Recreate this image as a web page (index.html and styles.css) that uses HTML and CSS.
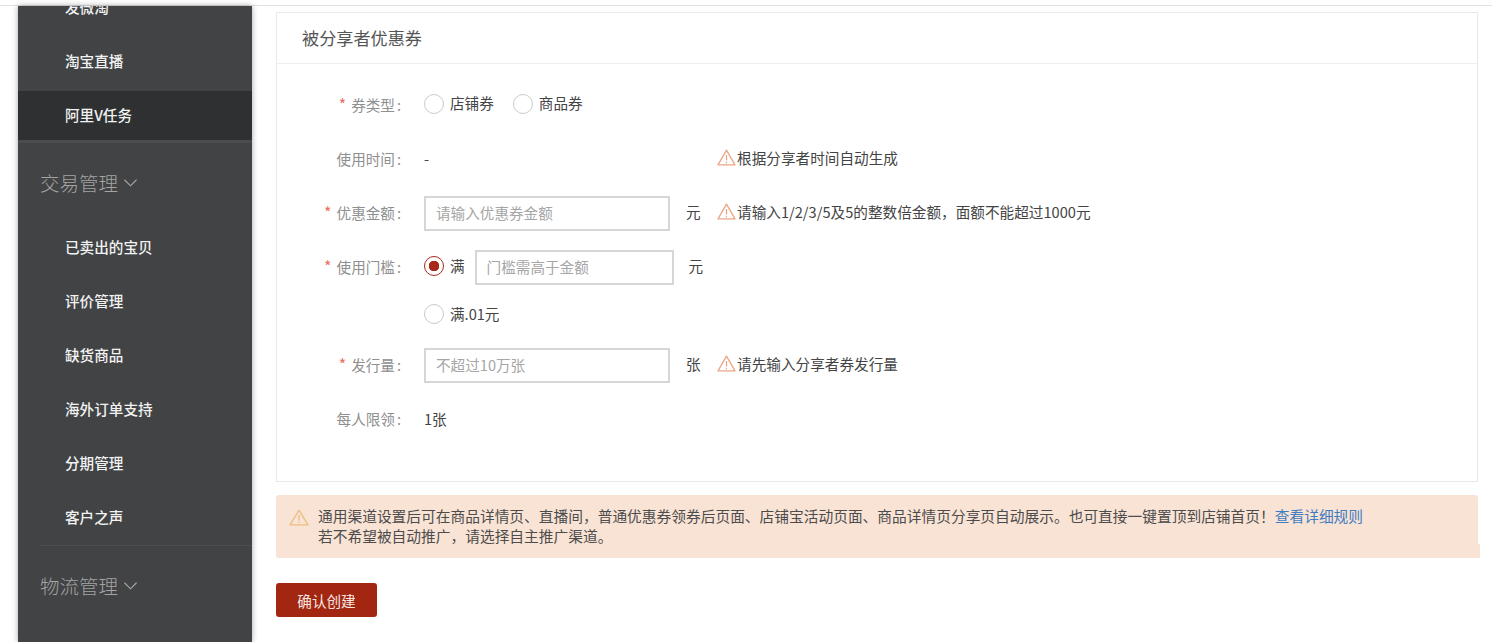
FILE: index.html
```html
<!DOCTYPE html>
<html lang="zh-CN">
<head>
<meta charset="utf-8">
<title>被分享者优惠券</title>
<link rel="stylesheet" href="styles.css">
</head>
<body>
<div class="page">
  <aside class="sidebar">
    <ul class="menu">
      <li class="item">发微淘</li>
      <li class="item">淘宝直播</li>
      <li class="item active">阿里V任务</li>
      <li class="group">交易管理<svg class="chev" viewBox="0 0 14 8"><path d="M.5.5 7 7 13.5.5"/></svg></li>
      <li class="item">已卖出的宝贝</li>
      <li class="item">评价管理</li>
      <li class="item">缺货商品</li>
      <li class="item">海外订单支持</li>
      <li class="item">分期管理</li>
      <li class="item">客户之声</li>
      <li class="divider"></li>
      <li class="group group-last">物流管理<svg class="chev" viewBox="0 0 14 8"><path d="M.5.5 7 7 13.5.5"/></svg></li>
    </ul>
  </aside>
  <main class="main">
    <section class="card">
      <h2 class="card-title">被分享者优惠券</h2>
      <div class="form">
        <div class="row">
          <div class="label"><span class="req">*</span>券类型<span class="colon">:</span></div>
          <div class="control wide">
            <span class="radio"></span><span class="opt opt-up">店铺券</span>
            <span class="radio radio-second"></span><span class="opt opt-up">商品券</span>
          </div>
        </div>
        <div class="row">
          <div class="label">使用时间<span class="colon">:</span></div>
          <div class="control value">-</div>
          <div class="unit"></div>
          <div class="hint"><svg class="warn" viewBox="0 0 19 17"><path d="M9.5 1.2 1 15.8h17z"/><path d="M9.5 6v5.6M9.5 12.8v1.4"/></svg>根据分享者时间自动生成</div>
        </div>
        <div class="row">
          <div class="label"><span class="req">*</span>优惠金额<span class="colon">:</span></div>
          <div class="control"><input class="input" placeholder="请输入优惠券金额"></div>
          <div class="unit">元</div>
          <div class="hint"><svg class="warn" viewBox="0 0 19 17"><path d="M9.5 1.2 1 15.8h17z"/><path d="M9.5 6v5.6M9.5 12.8v1.4"/></svg>请输入1/2/3/5及5的整数倍金额，面额不能超过1000元</div>
        </div>
        <div class="row">
          <div class="label"><span class="req">*</span>使用门槛<span class="colon">:</span></div>
          <div class="control wide">
            <span class="radio checked"></span><span class="opt">满</span>
            <input class="input input-small" placeholder="门槛需高于金额">
            <span class="unit-inline">元</span>
          </div>
        </div>
        <div class="row row-short">
          <div class="label"></div>
          <div class="control wide"><span class="radio"></span><span class="opt">满.01元</span></div>
        </div>
        <div class="row row-tall">
          <div class="label"><span class="req">*</span>发行量<span class="colon">:</span></div>
          <div class="control"><input class="input" placeholder="不超过10万张"></div>
          <div class="unit">张</div>
          <div class="hint"><svg class="warn" viewBox="0 0 19 17"><path d="M9.5 1.2 1 15.8h17z"/><path d="M9.5 6v5.6M9.5 12.8v1.4"/></svg>请先输入分享者券发行量</div>
        </div>
        <div class="row row-last">
          <div class="label">每人限领<span class="colon">:</span></div>
          <div class="control value">1张</div>
        </div>
      </div>
    </section>
    <div class="alert">
      <svg class="alert-icon" viewBox="0 0 20 17"><path d="M10 1.2 1 15.8h18z"/><path d="M10 6v5.4M10 12.6v1.4"/></svg>
      <p class="alert-text">通用渠道设置后可在商品详情页、直播间，普通优惠券领券后页面、店铺宝活动页面、商品详情页分享页自动展示。也可直接一键置顶到店铺首页！<a class="link">查看详细规则</a><br>若不希望被自动推广，请选择自主推广渠道。</p>
    </div>
    <button class="submit">确认创建</button>
  </main>
</div>
</body>
</html>
```

FILE: styles.css
```css
* { box-sizing: border-box; }
html, body { margin: 0; height: 642px; overflow: hidden; background: #fff; }
body {
  font-family: "Noto Sans CJK SC", "Liberation Sans", sans-serif;
  font-size: 14.6px;
  color: #444;
}
.page {
  display: flex;
  height: 642px;
  border-top: 6px solid #e6e6e6;
  border-image: linear-gradient(#fff 0 5px, #e2e2e2 5px) 6;
}
.sidebar {
  width: 234px;
  margin-left: 18px;
  height: 636px;
  flex: none;
  background: #414344;
  box-shadow: 0 0 6px rgba(0, 0, 0, .35);
  overflow: hidden;
}
.menu { list-style: none; margin: -26px 0 0; padding: 0; }
.item {
  height: 54px;
  line-height: 53px;
  padding-left: 47px;
  color: #f2f2f2;
  font-weight: 500;
}
.active {
  height: 49px;
  line-height: 47px;
  margin-top: 3px;
  background: #2f3031;
}
.group {
  height: 80px;
  padding: 24.5px 0 0 22px;
  line-height: 30px;
  font-size: 19.5px;
  font-weight: 300;
  color: #a4a4a4;
  border-top: 3px solid #4a4d4f;
}
.group-last { border-top: 0; height: 70px; padding-top: 24.5px; }
.chev {
  width: 13px;
  height: 8px;
  margin-left: 6px;
  vertical-align: 4px;
  fill: none;
  stroke: #a8a8a8;
  stroke-width: 1.2;
}
.divider { height: 1px; margin: 1px 0 0 22px; background: #4c4f51; }
.main { flex: 1; padding: 6px 14px 0 24px; }
.card { border: 1px solid #e9e9e9; height: 470px; }
.card-title {
  margin: 0;
  height: 51px;
  line-height: 50px;
  padding-left: 25px;
  font-size: 17.15px;
  font-weight: 400;
  color: #555;
  border-bottom: 1px solid #eee;
}
.form { padding-top: 13px; }
.row {
  display: grid;
  grid-template-columns: 126px 21px 262px 31px 1fr;
  height: 54px;
  align-items: center;
}
.row-short { height: 42px; }
.row-tall { height: 58px; }
.row-last { height: 50px; }
.label {
  grid-column: 1;
  padding-right: 2px;
  text-align: right;
  color: #8f8f8f;
  white-space: nowrap;
}
.req { margin-right: 5px; font-size: 16px; line-height: 1; color: #e8705f; }
.colon { margin-left: 2px; }
.control { grid-column: 3; display: flex; align-items: center; color: #444; }
.wide { grid-column: 3 / 6; }
.unit { grid-column: 4; margin-bottom: 1px; }
.hint {
  grid-column: 5;
  display: flex;
  align-items: center;
  margin-bottom: 2px;
  font-size: 14.63px;
  white-space: nowrap;
}
.value { height: 20px; }
.radio {
  width: 20px;
  height: 20px;
  flex: none;
  border: 1.5px solid #cbcbcb;
  border-radius: 50%;
  background: #fff;
}
.radio-second { margin-left: 19px; }
.checked {
  border: 1.5px solid #a8281a;
  background: radial-gradient(circle, #a8281a 0 5px, #fff 5.5px);
}
.opt { margin: 0 0 2px 6px; }
.opt-up { margin-bottom: 4px; }
.input {
  width: 246px;
  height: 35px;
  margin-top: 2px;
  padding: 0 10px 2px;
  border: 2px solid #d6d6d6;
  border-radius: 0;
  background: #fff;
  font: inherit;
  color: #444;
  outline: none;
}
.input::placeholder { color: #a6a6a6; opacity: 1; }
.input-small { width: 199px; margin-left: 10px; }
.unit-inline { margin: 0 0 1px 15px; }
.warn, .alert-icon { flex: none; fill: none; stroke-linejoin: round; }
.warn { width: 19px; height: 17px; margin-right: 1px; stroke: #e9a587; stroke-width: 1.3; }
.alert {
  position: relative;
  display: flex;
  align-items: center;
  margin-top: 13px;
  height: 63px;
  padding-left: 13px;
  background: #f9e3d5;
  border-radius: 3px 3px 0 3px;
}
.alert::after {
  content: "";
  position: absolute;
  top: 49px;
  right: -2px;
  width: 2px;
  height: 14px;
  background: #f9e3d5;
}
.alert-icon { width: 20px; height: 17px; margin: 0 9px 19px 0; stroke: #ecbd80; stroke-width: 1.3; }
.alert-text {
  margin: 0 0 2px;
  font-size: 14.72px;
  line-height: 20px;
  color: #4c4c4c;
  white-space: nowrap;
}
.link { color: #3f7cc0; }
.submit {
  display: block;
  width: 101px;
  height: 34px;
  margin-top: 25px;
  padding: 0;
  border: 0;
  border-radius: 3px;
  background: #a32611;
  color: #f6e7e3;
  font: inherit;
}
```
